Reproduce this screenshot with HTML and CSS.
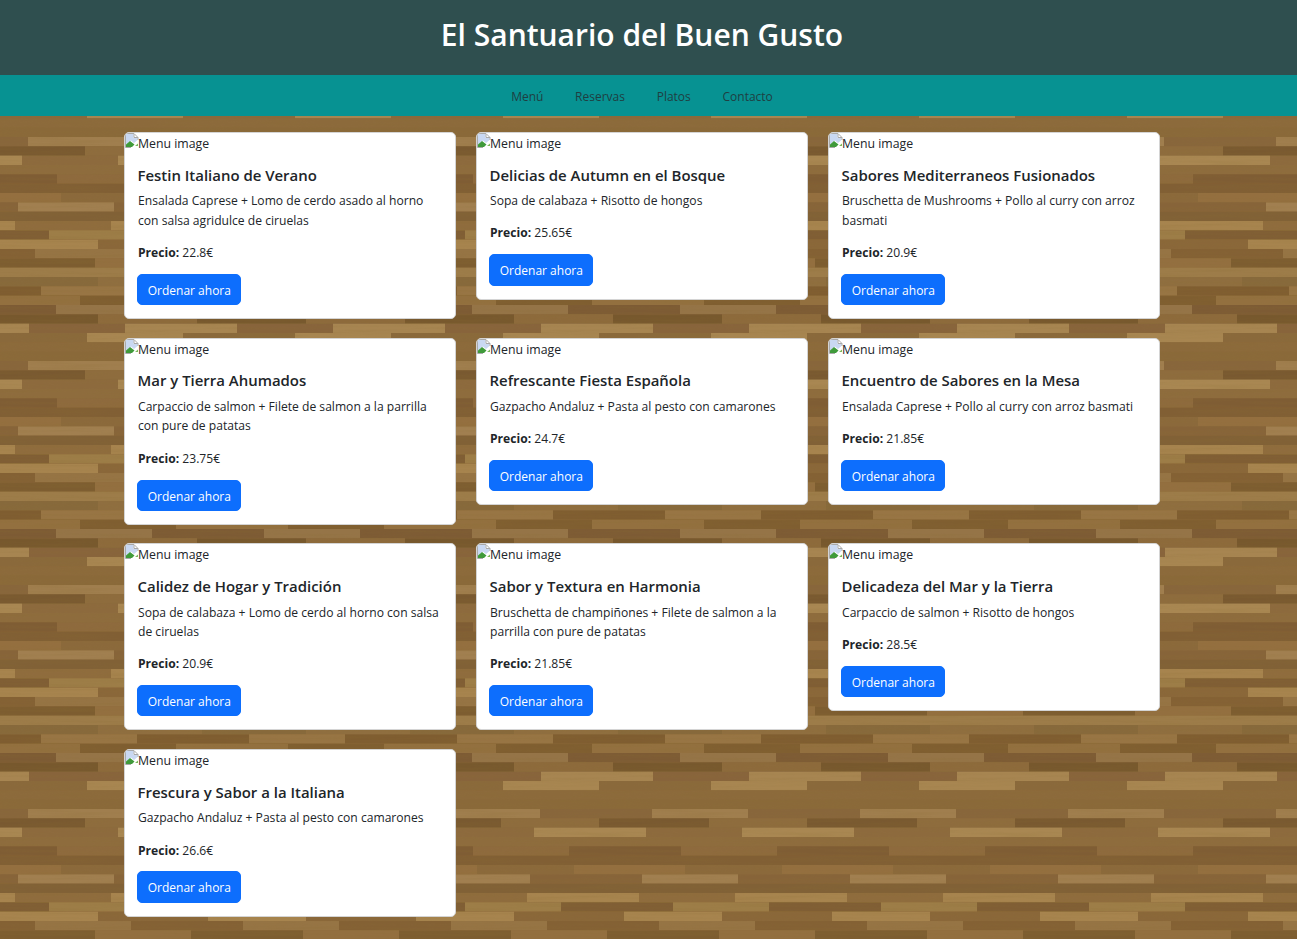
FILE: index.html
```html
<!DOCTYPE html>
<html lang="es">
<head>
<meta charset="utf-8">
<title>El Santuario del Buen Gusto</title>
<link rel="stylesheet" href="styles.css">
</head>
<body>
<header class="site-header"><h1>El Santuario del Buen Gusto</h1></header>
<nav class="site-nav">
  <a href="#">Menú</a><a href="#">Reservas</a><a href="#">Platos</a><a href="#">Contacto</a>
</nav>
<main class="menu-grid">
  <article class="card"><div class="thumb"><svg class="broken" viewBox="0 0 16 16"><path class="b-sky" d="M1 1H8.5V5H12.5V7L9 10L6 7.5L1 11.5Z"/><path class="b-leaf" d="M1 14V11.5L5 8L9.5 11.5L7 14Z"/><path class="b-bit" d="M10 13L13 10.5V13Z"/><path class="b-line" d="M.5 14.5V.5H9L13 4.5V7M9 1V4.5H13M.5 14.5H6"/></svg><span>Menu image</span></div><div class="body"><h2>Festin Italiano de Verano</h2><p class="desc">Ensalada Caprese + Lomo de cerdo asado al horno con salsa agridulce de ciruelas</p><p class="price"><strong>Precio:</strong> 22.8€</p><a class="btn" href="#">Ordenar ahora</a></div></article>
  <article class="card"><div class="thumb"><svg class="broken" viewBox="0 0 16 16"><path class="b-sky" d="M1 1H8.5V5H12.5V7L9 10L6 7.5L1 11.5Z"/><path class="b-leaf" d="M1 14V11.5L5 8L9.5 11.5L7 14Z"/><path class="b-bit" d="M10 13L13 10.5V13Z"/><path class="b-line" d="M.5 14.5V.5H9L13 4.5V7M9 1V4.5H13M.5 14.5H6"/></svg><span>Menu image</span></div><div class="body"><h2>Delicias de Autumn en el Bosque</h2><p class="desc">Sopa de calabaza + Risotto de hongos</p><p class="price"><strong>Precio:</strong> 25.65€</p><a class="btn" href="#">Ordenar ahora</a></div></article>
  <article class="card"><div class="thumb"><svg class="broken" viewBox="0 0 16 16"><path class="b-sky" d="M1 1H8.5V5H12.5V7L9 10L6 7.5L1 11.5Z"/><path class="b-leaf" d="M1 14V11.5L5 8L9.5 11.5L7 14Z"/><path class="b-bit" d="M10 13L13 10.5V13Z"/><path class="b-line" d="M.5 14.5V.5H9L13 4.5V7M9 1V4.5H13M.5 14.5H6"/></svg><span>Menu image</span></div><div class="body"><h2>Sabores Mediterraneos Fusionados</h2><p class="desc">Bruschetta de Mushrooms + Pollo al curry con arroz basmati</p><p class="price"><strong>Precio:</strong> 20.9€</p><a class="btn" href="#">Ordenar ahora</a></div></article>
  <article class="card"><div class="thumb"><svg class="broken" viewBox="0 0 16 16"><path class="b-sky" d="M1 1H8.5V5H12.5V7L9 10L6 7.5L1 11.5Z"/><path class="b-leaf" d="M1 14V11.5L5 8L9.5 11.5L7 14Z"/><path class="b-bit" d="M10 13L13 10.5V13Z"/><path class="b-line" d="M.5 14.5V.5H9L13 4.5V7M9 1V4.5H13M.5 14.5H6"/></svg><span>Menu image</span></div><div class="body"><h2>Mar y Tierra Ahumados</h2><p class="desc">Carpaccio de salmon + Filete de salmon a la parrilla con pure de patatas</p><p class="price"><strong>Precio:</strong> 23.75€</p><a class="btn" href="#">Ordenar ahora</a></div></article>
  <article class="card"><div class="thumb"><svg class="broken" viewBox="0 0 16 16"><path class="b-sky" d="M1 1H8.5V5H12.5V7L9 10L6 7.5L1 11.5Z"/><path class="b-leaf" d="M1 14V11.5L5 8L9.5 11.5L7 14Z"/><path class="b-bit" d="M10 13L13 10.5V13Z"/><path class="b-line" d="M.5 14.5V.5H9L13 4.5V7M9 1V4.5H13M.5 14.5H6"/></svg><span>Menu image</span></div><div class="body"><h2>Refrescante Fiesta Española</h2><p class="desc">Gazpacho Andaluz + Pasta al pesto con camarones</p><p class="price"><strong>Precio:</strong> 24.7€</p><a class="btn" href="#">Ordenar ahora</a></div></article>
  <article class="card"><div class="thumb"><svg class="broken" viewBox="0 0 16 16"><path class="b-sky" d="M1 1H8.5V5H12.5V7L9 10L6 7.5L1 11.5Z"/><path class="b-leaf" d="M1 14V11.5L5 8L9.5 11.5L7 14Z"/><path class="b-bit" d="M10 13L13 10.5V13Z"/><path class="b-line" d="M.5 14.5V.5H9L13 4.5V7M9 1V4.5H13M.5 14.5H6"/></svg><span>Menu image</span></div><div class="body"><h2>Encuentro de Sabores en la Mesa</h2><p class="desc">Ensalada Caprese + Pollo al curry con arroz basmati</p><p class="price"><strong>Precio:</strong> 21.85€</p><a class="btn" href="#">Ordenar ahora</a></div></article>
  <article class="card"><div class="thumb"><svg class="broken" viewBox="0 0 16 16"><path class="b-sky" d="M1 1H8.5V5H12.5V7L9 10L6 7.5L1 11.5Z"/><path class="b-leaf" d="M1 14V11.5L5 8L9.5 11.5L7 14Z"/><path class="b-bit" d="M10 13L13 10.5V13Z"/><path class="b-line" d="M.5 14.5V.5H9L13 4.5V7M9 1V4.5H13M.5 14.5H6"/></svg><span>Menu image</span></div><div class="body"><h2>Calidez de Hogar y Tradición</h2><p class="desc">Sopa de calabaza + Lomo de cerdo al horno con salsa de ciruelas</p><p class="price"><strong>Precio:</strong> 20.9€</p><a class="btn" href="#">Ordenar ahora</a></div></article>
  <article class="card"><div class="thumb"><svg class="broken" viewBox="0 0 16 16"><path class="b-sky" d="M1 1H8.5V5H12.5V7L9 10L6 7.5L1 11.5Z"/><path class="b-leaf" d="M1 14V11.5L5 8L9.5 11.5L7 14Z"/><path class="b-bit" d="M10 13L13 10.5V13Z"/><path class="b-line" d="M.5 14.5V.5H9L13 4.5V7M9 1V4.5H13M.5 14.5H6"/></svg><span>Menu image</span></div><div class="body"><h2>Sabor y Textura en Harmonia</h2><p class="desc">Bruschetta de champiñones + Filete de salmon a la parrilla con pure de patatas</p><p class="price"><strong>Precio:</strong> 21.85€</p><a class="btn" href="#">Ordenar ahora</a></div></article>
  <article class="card"><div class="thumb"><svg class="broken" viewBox="0 0 16 16"><path class="b-sky" d="M1 1H8.5V5H12.5V7L9 10L6 7.5L1 11.5Z"/><path class="b-leaf" d="M1 14V11.5L5 8L9.5 11.5L7 14Z"/><path class="b-bit" d="M10 13L13 10.5V13Z"/><path class="b-line" d="M.5 14.5V.5H9L13 4.5V7M9 1V4.5H13M.5 14.5H6"/></svg><span>Menu image</span></div><div class="body"><h2>Delicadeza del Mar y la Tierra</h2><p class="desc">Carpaccio de salmon + Risotto de hongos</p><p class="price"><strong>Precio:</strong> 28.5€</p><a class="btn" href="#">Ordenar ahora</a></div></article>
  <article class="card"><div class="thumb"><svg class="broken" viewBox="0 0 16 16"><path class="b-sky" d="M1 1H8.5V5H12.5V7L9 10L6 7.5L1 11.5Z"/><path class="b-leaf" d="M1 14V11.5L5 8L9.5 11.5L7 14Z"/><path class="b-bit" d="M10 13L13 10.5V13Z"/><path class="b-line" d="M.5 14.5V.5H9L13 4.5V7M9 1V4.5H13M.5 14.5H6"/></svg><span>Menu image</span></div><div class="body"><h2>Frescura y Sabor a la Italiana</h2><p class="desc">Gazpacho Andaluz + Pasta al pesto con camarones</p><p class="price"><strong>Precio:</strong> 26.6€</p><a class="btn" href="#">Ordenar ahora</a></div></article>
</main>
</body>
</html>
```
FILE: styles.css
```css
* { box-sizing: border-box; }
html { height: 100%; overflow: hidden; }
body {
  margin: 0;
  height: 100%;
  overflow: hidden;
  font-family: "Open Sans", "Noto Sans", sans-serif;
  font-size: 13px;
  line-height: 19.5px;
  color: #212529;
  background-color: #8c6a3b;
  background-position: 98px -3px;
  background-size: 208px 224px;
  background-image: url("data:image/svg+xml,%3Csvg xmlns='http://www.w3.org/2000/svg' width='208' height='224'%3E%3Cdefs%3E%3Cfilter id='b' x='0' y='0' width='100%25' height='100%25'%3E%3CfeGaussianBlur stdDeviation='.45'/%3E%3C/filter%3E%3Cfilter id='g' x='0' y='0' width='100%25' height='100%25'%3E%3CfeTurbulence type='fractalNoise' baseFrequency='.012 .35' numOctaves='3' seed='7' stitchTiles='stitch'/%3E%3CfeColorMatrix values='0 0 0 0 .25 0 0 0 0 .15 0 0 0 0 .03 1.4 0 0 0 -.55'/%3E%3C/filter%3E%3C/defs%3E%3Crect width='208' height='224' fill='%238c6a3b'/%3E%3Cg filter='url(%23b)'%3E%3Crect y='0' width='208' height='9.34' fill='%238f6c3c'/%3E%3Crect x='13' y='0' width='112' height='9.34' fill='%23ab8851'/%3E%3Crect y='9.33' width='208' height='9.34' fill='%23a08048'/%3E%3Crect x='47' y='9.33' width='112' height='9.34' fill='%237e5c30'/%3E%3Crect y='18.67' width='208' height='9.34' fill='%238a6637'/%3E%3Crect x='110' y='18.67' width='98' height='9.34' fill='%23ab8851'/%3E%3Crect y='28' width='208' height='9.34' fill='%23987645'/%3E%3Crect x='33' y='28' width='112' height='9.34' fill='%23835f33'/%3E%3Crect y='37.33' width='208' height='9.34' fill='%2394703f'/%3E%3Crect x='93' y='37.33' width='112' height='9.34' fill='%237a5a2d'/%3E%3Crect y='46.67' width='208' height='9.34' fill='%23a07f4c'/%3E%3Crect y='56' width='208' height='9.34' fill='%238f6e40'/%3E%3Crect x='104' y='56' width='104' height='9.34' fill='%2386673a'/%3E%3Crect y='65.33' width='208' height='9.34' fill='%239a7745'/%3E%3Crect x='39' y='65.33' width='112' height='9.34' fill='%237b5a2f'/%3E%3Crect y='74.67' width='208' height='9.34' fill='%237d5b2f'/%3E%3Crect x='78' y='74.67' width='112' height='9.34' fill='%2394713f'/%3E%3Crect y='84' width='208' height='9.34' fill='%2396744a'/%3E%3Crect x='54' y='84' width='112' height='9.34' fill='%237a5930'/%3E%3Crect y='93.33' width='208' height='9.34' fill='%238d6a3a'/%3E%3Crect x='99' y='93.33' width='109' height='9.34' fill='%2373542a'/%3E%3Crect y='102.67' width='208' height='9.34' fill='%2387643a'/%3E%3Crect x='27' y='102.67' width='112' height='9.34' fill='%23ab8a55'/%3E%3Crect y='112' width='208' height='9.34' fill='%238a673a'/%3E%3Crect x='0' y='112' width='85' height='9.34' fill='%23ad8b55'/%3E%3Crect x='197' y='112' width='11' height='9.34' fill='%23ad8b55'/%3E%3Crect y='121.33' width='208' height='9.34' fill='%238c6a3b'/%3E%3Crect y='130.67' width='208' height='9.34' fill='%23896839'/%3E%3Crect y='140' width='208' height='9.34' fill='%2387653a'/%3E%3Crect x='138' y='140' width='70' height='9.34' fill='%23a38151'/%3E%3Crect x='0' y='140' width='26' height='9.34' fill='%23a38151'/%3E%3Crect y='149.33' width='208' height='9.34' fill='%238e6c3d'/%3E%3Crect x='85' y='149.33' width='110' height='9.34' fill='%2376572d'/%3E%3Crect y='158.67' width='208' height='9.34' fill='%238d6b3d'/%3E%3Crect x='20' y='158.67' width='112' height='9.34' fill='%23ae8c56'/%3E%3Crect y='168' width='208' height='9.34' fill='%238e6c3e'/%3E%3Crect y='177.33' width='208' height='9.34' fill='%238e6b3c'/%3E%3Crect x='55' y='177.33' width='112' height='9.34' fill='%237b5a30'/%3E%3Crect y='186.67' width='208' height='9.34' fill='%237f5d30'/%3E%3Crect y='196' width='208' height='9.34' fill='%238b693b'/%3E%3Crect x='60' y='196' width='111' height='9.34' fill='%23956f40'/%3E%3Crect y='205.33' width='208' height='9.34' fill='%23866338'/%3E%3Crect x='128' y='205.33' width='80' height='9.34' fill='%23a48252'/%3E%3Crect x='0' y='205.33' width='16' height='9.34' fill='%23a48252'/%3E%3Crect y='214.67' width='208' height='9.34' fill='%237f5f35'/%3E%3C/g%3E%3Crect width='208' height='224' fill='%238c6a3b' opacity='.15'/%3E%3Crect width='208' height='224' filter='url(%23g)' opacity='.28'/%3E%3C/svg%3E");
}
.site-header {
  background: #2f4f4f;
  height: 75px;
  padding: 15px 13px 0 0;
  text-align: center;
}
.site-header h1 {
  margin: 0;
  font-size: 30px;
  line-height: 39px;
  font-weight: 600;
  color: #fff;
}
.site-nav {
  background: #079292;
  height: 41px;
  padding: 2px 13px 0 0;
  display: flex;
  justify-content: center;
  align-items: center;
  gap: 31.7px;
}
.site-nav a {
  color: #1f3f42;
  text-decoration: none;
  font-size: 12px;
}
.menu-grid {
  width: 1036px;
  margin: 16px 0 0 124px;
  display: grid;
  grid-template-columns: repeat(3, 332px);
  column-gap: 20px;
  row-gap: 18.7px;
  align-items: start;
}
.card {
  background: #fff;
  border: 1px solid #d4d4d4;
  border-radius: 5px;
  overflow: hidden;
}
.thumb {
  display: flex;
  height: 19.5px;
  align-items: flex-start;
  font-size: 12.3px;
}
.thumb span { padding-top: 1px; }
.broken { width: 16px; height: 16px; flex: none; margin-right: -3px; }
.b-line { fill: none; stroke: #a9a9a9; stroke-width: 1; }
.b-sky { fill: #c9d8f2; }
.b-leaf { fill: #3f9a3a; }
.b-bit { fill: #7db85c; }
.body { padding: 13px 12px; }
h2 {
  margin: 0 0 6.2px;
  padding-left: .5px;
  font-size: 14.95px;
  line-height: 19.5px;
  font-weight: 600;
}
.desc { margin: 0 0 12.8px; font-size: 12.12px; padding-left: 1px; }
.price { margin: 0 0 11.3px; font-size: 12.12px; padding-left: 1px; }
.price strong { font-weight: 700; }
.btn {
  display: inline-block;
  background: #0d6efd;
  color: #fff;
  text-decoration: none;
  border: 1px solid #0d6efd;
  border-radius: 5px;
  padding: 6px 9px 3.75px 9.75px;
  font-size: 12px;
}
```
